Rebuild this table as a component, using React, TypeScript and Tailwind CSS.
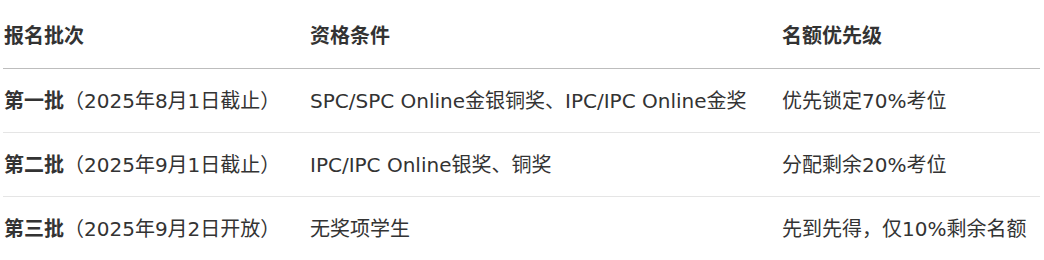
import React from 'react';

const rows = [
  { batch: '第一批', note: '（2025年8月1日截止）', cond: 'SPC/SPC Online金银铜奖、IPC/IPC Online金奖', quota: '优先锁定70%考位' },
  { batch: '第二批', note: '（2025年9月1日截止）', cond: 'IPC/IPC Online银奖、铜奖', quota: '分配剩余20%考位' },
  { batch: '第三批', note: '（2025年9月2日开放）', cond: '无奖项学生', quota: '先到先得，仅10%剩余名额' },
];

export default function App() {
  return (
    <div className="bg-white w-[1044px] h-[260px] overflow-hidden">
      <div className="ml-[3px] w-[1037px] text-[20px] text-[#333] font-['DejaVu_Sans','Noto_Sans_CJK_SC',sans-serif]">
        {/* Header */}
        <div className="flex items-center h-[69px] pt-[3px] border-b border-[#bdbdbd] font-bold">
          <div className="w-[307px] pl-px">报名批次</div>
          <div className="w-[472px]">资格条件</div>
          <div className="flex-1">名额优先级</div>
        </div>
        {rows.map((r) => (
          <div key={r.batch} className="flex items-center h-[64px] border-b border-[#e5e5e5] whitespace-nowrap">
            <div className="w-[307px] pl-px">
              <span className="font-bold">{r.batch}</span>
              {r.note}
            </div>
            <div className="w-[472px]">{r.cond}</div>
            <div className="flex-1">{r.quota}</div>
          </div>
        ))}
      </div>
    </div>
  );
}
